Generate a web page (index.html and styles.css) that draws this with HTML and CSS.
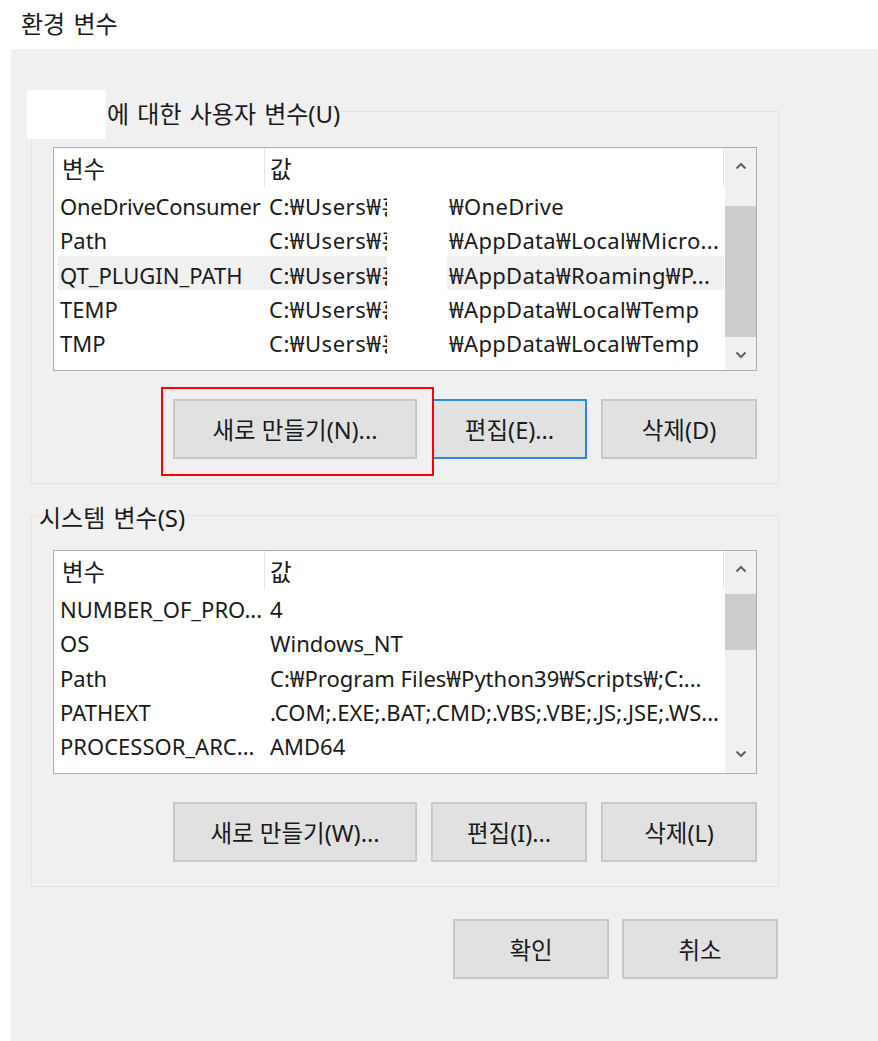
FILE: index.html
```html
<!DOCTYPE html>
<html lang="ko">
<head>
    <meta charset="UTF-8">
    <title>환경 변수</title>
    <link rel="stylesheet" href="styles.css">
</head>
<body>
    <div class="title">환경 변수</div>

    <div class="dialog">
        <fieldset class="group">
            <legend class="masked"><span class="name-mask"></span>에 대한 사용자 변수(U)</legend>
            <div class="listbox">
                <div class="table">
                    <div class="head"><span class="head-name">변수</span><span class="head-value">값</span></div>
                    <div class="row"><span class="name tight">OneDriveConsumer</span><span class="value-left">C:₩Users₩홍길동</span><span class="gap"></span><span class="value-right">₩OneDrive</span></div>
                    <div class="row"><span class="name">Path</span><span class="value-left">C:₩Users₩홍길동</span><span class="gap"></span><span class="value-right">₩AppData₩Local₩Micro...</span></div>
                    <div class="row selected"><span class="name">QT_PLUGIN_PATH</span><span class="value-left">C:₩Users₩홍길동</span><span class="gap"></span><span class="value-right">₩AppData₩Roaming₩P...</span></div>
                    <div class="row"><span class="name">TEMP</span><span class="value-left">C:₩Users₩홍길동</span><span class="gap"></span><span class="value-right">₩AppData₩Local₩Temp</span></div>
                    <div class="row"><span class="name">TMP</span><span class="value-left">C:₩Users₩홍길동</span><span class="gap"></span><span class="value-right">₩AppData₩Local₩Temp</span></div>
                </div>
                <div class="scrollbar">
                    <svg class="arrow" viewBox="0 0 12 8"><path d="M1.5 6.5 6 2l4.500 4.500"/></svg>
                    <div class="track"><div class="thumb thumb-user"></div></div>
                    <svg class="arrow" viewBox="0 0 12 8"><path d="M1.500 1.500 6 6l4.500-4.500"/></svg>
                </div>
            </div>
            <div class="buttons">
                <div class="callout-wrap">
                    <button class="btn wide">새로 만들기(N)...</button>
                    <div class="callout"></div>
                </div>
                <button class="btn focused">편집(E)...</button>
                <button class="btn">삭제(D)</button>
            </div>
        </fieldset>

        <fieldset class="group second">
            <legend>시스템 변수(S)</legend>
            <div class="listbox">
                <div class="table">
                    <div class="head"><span class="head-name">변수</span><span class="head-value">값</span></div>
                    <div class="row"><span class="name">NUMBER_OF_PRO...</span><span class="value">4</span></div>
                    <div class="row"><span class="name">OS</span><span class="value">Windows_NT</span></div>
                    <div class="row"><span class="name">Path</span><span class="value">C:₩Program Files₩Python39₩Scripts₩;C:...</span></div>
                    <div class="row"><span class="name">PATHEXT</span><span class="value">.COM;.EXE;.BAT;.CMD;.VBS;.VBE;.JS;.JSE;.WS...</span></div>
                    <div class="row"><span class="name">PROCESSOR_ARC...</span><span class="value">AMD64</span></div>
                </div>
                <div class="scrollbar">
                    <svg class="arrow" viewBox="0 0 12 8"><path d="M1.5 6.5 6 2l4.500 4.500"/></svg>
                    <div class="track"><div class="thumb thumb-system"></div></div>
                    <svg class="arrow" viewBox="0 0 12 8"><path d="M1.500 1.500 6 6l4.500-4.500"/></svg>
                </div>
            </div>
            <div class="buttons">
                <button class="btn wide">새로 만들기(W)...</button>
                <button class="btn">편집(I)...</button>
                <button class="btn">삭제(L)</button>
            </div>
        </fieldset>

        <div class="footer">
            <button class="btn">확인</button>
            <button class="btn">취소</button>
        </div>
    </div>
</body>
</html>
```

FILE: styles.css
```css
body {
    margin: 0;
    width: 878px;
    height: 1041px;
    overflow: hidden;
    background-color: #ffffff;
    color: #1a1a1a;
    font-family: "Noto Sans", "Noto Sans CJK KR", sans-serif;
    font-size: 22px;
}

.title {
    height: 49px;
    padding-left: 21px;
    line-height: 47px;
    font-size: 24px;
    word-spacing: 2px;
    box-sizing: border-box;
}

.dialog {
    height: 992px;
    margin-left: 11px;
    padding: 44px 0 0 20px;
    box-sizing: border-box;
    background-color: #f0f0f0;
}

.group {
    width: 748px;
    margin: 0;
    padding: 18px 21px 24px 21px;
    border: 1px solid #e3e3e3;
    box-sizing: border-box;
}

.second {
    margin-top: 13px;
    padding-top: 17px;
}

/* padding-top keeps the text a little under the group line */
.group legend {
    margin-left: -14px;
    padding: 6px 0 0 0;
    line-height: 30px;
    font-size: 24px;
    word-spacing: 2px;
}

.group legend.masked {
    position: relative;
    margin-left: -26px;
    padding-left: 80px;
}

.name-mask {
    position: absolute;
    left: 0;
    top: -3px;
    width: 79px;
    height: 49px;
    background-color: #ffffff;
}

.listbox {
    display: flex;
    height: 224px;
    border: 1px solid #a9acb5;
    box-sizing: border-box;
    background-color: #ffffff;
}

.table {
    flex: 1;
    min-width: 0;
}

.head {
    display: flex;
    height: 39px;
    line-height: 42px;
    font-size: 23.5px;
}

.head-name {
    width: 209px;
    padding-left: 6px;
    box-sizing: border-box;
    border-right: 1px solid #e5e5e5;
    margin-left: 2px;
    flex: none;
}

.head-value {
    flex: 1;
    padding-left: 5px;
    border-right: 1px solid #e5e5e5;
}

.row {
    display: flex;
    height: 34.3px;
    line-height: 39px;
    margin-left: 4px;
    white-space: nowrap;
}

.selected {
    background-color: #f0f0f0;
}

.name {
    width: 206px;
    padding-left: 2px;
    box-sizing: border-box;
    flex: none;
}

.tight {
    letter-spacing: -0.25px;
}

.value,
.value-left {
    padding-left: 6px;
}

.value-left {
    width: 123px;
    padding-left: 5px;
    box-sizing: border-box;
    overflow: hidden;
    letter-spacing: 0.5px;
    flex: none;
}

.gap {
    width: 60px;
    background-color: #ffffff;
    flex: none;
}

.value-right {
    flex: 1;
    padding-left: 2px;
    letter-spacing: 0.3px;
}

.scrollbar {
    display: flex;
    flex-direction: column;
    flex: none;
    width: 31px;
    margin-left: 1px;
    background-color: #f0f0f0;
}

.arrow {
    display: block;
    flex: none;
    width: 12px;
    height: 8px;
    padding: 14px 9px 15px 10px;
    fill: none;
    stroke: #606060;
    stroke-width: 2;
}

.track {
    flex: 1;
}

.thumb {
    background-color: #cdcdcd;
}

.thumb-user {
    height: 131px;
    margin-top: 21px;
}

.thumb-system {
    height: 56px;
    margin-top: 6px;
}

.buttons {
    display: flex;
    justify-content: flex-end;
    gap: 14px;
    margin-top: 28px;
}

.btn {
    width: 156px;
    height: 60px;
    padding: 0;
    border: 2px solid #c8c8c8;
    background-color: #e1e1e1;
    color: #1a1a1a;
    font-family: inherit;
    font-size: 23.5px;
}

.wide {
    width: 244px;
}

.focused {
    width: 155px;
    margin-left: 1px;
    border-color: #2a8ade;
}

.callout-wrap {
    position: relative;
    display: flex;
}

.callout {
    position: absolute;
    left: -12px;
    top: -12px;
    width: 273px;
    height: 89px;
    border: 2px solid #ff0000;
    box-sizing: border-box;
}

.footer {
    display: flex;
    justify-content: flex-end;
    gap: 13px;
    width: 747px;
    margin-top: 32px;
}
```
